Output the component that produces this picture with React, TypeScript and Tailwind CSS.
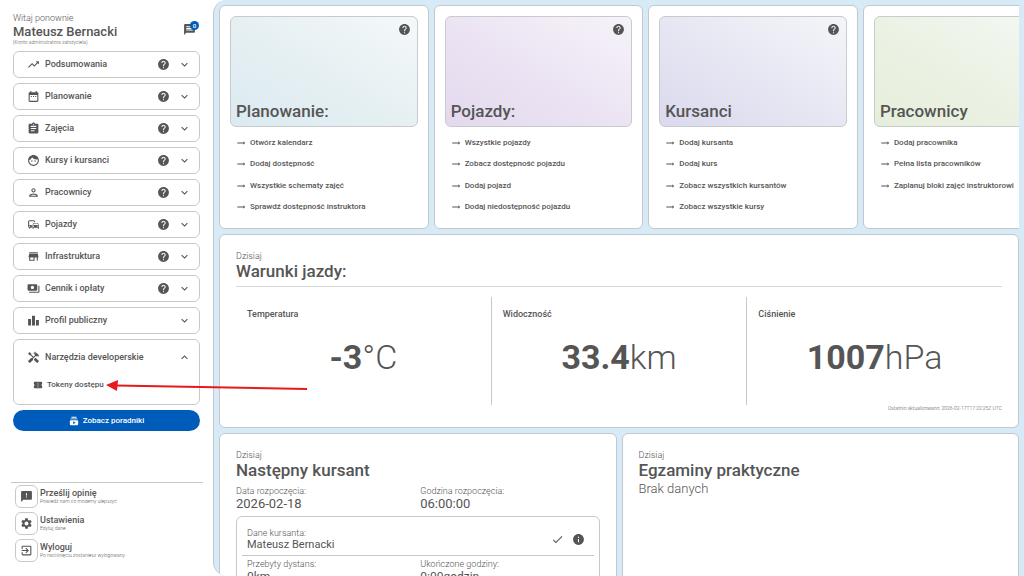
import type { ReactNode } from "react";
import type { IconType } from "react-icons";
import {
  MdTrendingUp, MdDateRange, MdAssignment, MdFace, MdOutlinePerson, MdOutlineCommute,
  MdStore, MdPayments, MdLeaderboard, MdHandyman, MdConfirmationNumber, MdSubscriptions,
  MdFeedback, MdSettings, MdExitToApp, MdMessage, MdHelp, MdExpandMore, MdExpandLess,
  MdTrendingFlat, MdCheck, MdInfo,
} from "react-icons/md";

const menu: { label: string; icon: IconType; help: boolean }[] = [
  { label: "Podsumowania", icon: MdTrendingUp, help: true },
  { label: "Planowanie", icon: MdDateRange, help: true },
  { label: "Zajęcia", icon: MdAssignment, help: true },
  { label: "Kursy i kursanci", icon: MdFace, help: true },
  { label: "Pracownicy", icon: MdOutlinePerson, help: true },
  { label: "Pojazdy", icon: MdOutlineCommute, help: true },
  { label: "Infrastruktura", icon: MdStore, help: true },
  { label: "Cennik i opłaty", icon: MdPayments, help: true },
  { label: "Profil publiczny", icon: MdLeaderboard, help: false },
];

const footer: { label: string; note: string; icon: IconType }[] = [
  { label: "Prześlij opinię", note: "Powiedź nam co możemy ulepszyć", icon: MdFeedback },
  { label: "Ustawienia", note: "Edytuj dane", icon: MdSettings },
  { label: "Wyloguj", note: "Po naciśnięciu zostaniesz wylogowany", icon: MdExitToApp },
];

const shortcuts = [
  {
    title: "Planowanie:",
    tint: "bg-linear-to-tr from-[#dbeaf2] via-[#e6f0f2] to-[#f4f8fb]",
    links: ["Otwórz kalendarz", "Dodaj dostępność", "Wszystkie schematy zajęć", "Sprawdź dostępność instruktora"],
  },
  {
    title: "Pojazdy:",
    tint: "bg-linear-to-tr from-[#e3d9ee] via-[#ece4f3] to-[#f6f3f9]",
    links: ["Wszystkie pojazdy", "Zobacz dostępność pojazdu", "Dodaj pojazd", "Dodaj niedostępność pojazdu"],
  },
  {
    title: "Kursanci",
    tint: "bg-linear-to-tr from-[#dbd9ee] via-[#e7e7f3] to-[#f4f5f9]",
    links: ["Dodaj kursanta", "Dodaj kurs", "Zobacz wszystkich kursantów", "Zobacz wszystkie kursy"],
  },
  {
    title: "Pracownicy",
    tint: "bg-linear-to-tr from-[#e6eedb] via-[#ecf2e4] to-[#f4f9f5]",
    links: ["Dodaj pracownika", "Pełna lista pracowników", "Zaplanuj bloki zajęć instruktorowi"],
  },
];

const weather = [
  { label: "Temperatura", value: "-3", unit: "°C" },
  { label: "Widoczność", value: "33.4", unit: "km" },
  { label: "Ciśnienie", value: "1007", unit: "hPa" },
];

function Card({ className, children }: { className: string; children: ReactNode }) {
  return <section className={`rounded-md border border-[#c4c8cb] bg-white ${className}`}>{children}</section>;
}

function Heading({ title }: { title: string }) {
  return (
    <header>
      <p className="text-[9px] leading-[10px] font-light">Dzisiaj</p>
      <h2 className="text-[17px] leading-5 font-medium">{title}</h2>
    </header>
  );
}

function Field({ label, value, size }: { label: string; value: string; size: string }) {
  return (
    <div className="flex-1">
      <dt className="text-[9px] leading-3 font-light">{label}</dt>
      <dd className={size}>{value}</dd>
    </div>
  );
}

function Sidebar() {
  return (
    <aside className="flex w-[213px] shrink-0 flex-col px-[13px] pt-[13px]">
      <header className="flex items-start justify-between">
        <div>
          <p className="text-[9px] leading-[11px] font-light">Witaj ponownie</p>
          <h1 className="text-[13px] leading-[15px] font-medium">Mateusz Bernacki</h1>
          <p className="text-[5px] leading-[6px] font-light">(Konto administratora założyciela)</p>
        </div>
        <button aria-label="Wiadomości" className="relative mt-[10px] mr-1">
          <MdMessage className="size-[13px]" />
          <span className="absolute -top-[2px] -right-[3px] flex size-[9px] items-center justify-center rounded-full bg-[#005cbb] text-[6px] font-medium text-white">0</span>
        </button>
      </header>

      <nav className="mt-[6px] flex flex-col gap-[5px]">
        {menu.map(({ label, icon: Icon, help }) => (
          <button key={label} className="flex h-[27px] items-center rounded-md border border-[#c8c8c8] pr-2 pl-[13px] text-[9px] font-medium">
            <Icon className="size-[13px]" />
            <span className="flex-1 pl-[5px] text-left">{label}</span>
            {help && <MdHelp className="mr-2 size-[13px]" />}
            <MdExpandMore className="size-[13px]" />
          </button>
        ))}
        <div className="h-[66px] rounded-md border border-[#c8c8c8] pr-2 pl-[13px] font-medium">
          <button className="flex h-[35px] w-full items-center text-[9px]">
            <MdHandyman className="size-[13px]" />
            <span className="flex-1 pl-[5px] text-left">Narzędzia developerskie</span>
            <MdExpandLess className="size-[13px]" />
          </button>
          <a href="#tokeny" className="flex h-5 items-center gap-1 pl-[6px] text-[8px]">
            <MdConfirmationNumber className="size-[10px]" />
            Tokeny dostępu
          </a>
        </div>
        <button className="flex h-[21px] items-center justify-center gap-1 rounded-full bg-[#005cbb] text-[8px] font-medium text-white">
          <MdSubscriptions className="size-[10px]" />
          Zobacz poradniki
        </button>
      </nav>

      <footer className="mt-auto mb-[14px] -ml-[2px] -mr-[3px] border-t border-[#c8c8c8] pt-[2px] pl-1">
        <ul className="flex flex-col gap-1">
          {footer.map(({ label, note, icon: Icon }) => (
            <li key={label}>
              <button className="flex items-center gap-[2px] text-left">
                <span className="flex size-[23px] items-center justify-center rounded-md border border-[#c8c8c8]">
                  <Icon className="size-[13px]" />
                </span>
                <span>
                  <span className="block text-[9px] leading-[10px] font-medium">{label}</span>
                  <span className="block text-[5px] leading-[7px] font-light">{note}</span>
                </span>
              </button>
            </li>
          ))}
        </ul>
      </footer>
    </aside>
  );
}

export default function App() {
  return (
    <div className="relative flex h-screen overflow-hidden bg-white font-[Roboto,sans-serif] text-[#555]">
      <Sidebar />
      <main className="min-w-0 flex-1 overflow-hidden rounded-l-[14px] border-l border-[#c4c8cb] bg-[#d6eaf8] p-[5px]">
        <div className="flex flex-col gap-[5px]">
          <div className="flex gap-[5px] overflow-hidden">
            {shortcuts.map(({ title, tint, links }) => (
              <Card key={title} className="h-[224px] w-[calc((100%-11px)*5/19+2px)] shrink-0 p-[10px]">
                <div className={`flex h-[111px] flex-col justify-between rounded-md border border-[#c8cacc] pb-1 pl-[5px] ${tint}`}>
                  <button aria-label="Pomoc" className="mt-[6px] mr-[6px] self-end">
                    <MdHelp className="size-[13px]" />
                  </button>
                  <h2 className="text-[17px] leading-[22px] font-medium">{title}</h2>
                </div>
                <ul className="flex h-[91px] flex-col pt-[5px] pl-[6px]">
                  {links.map((link) => (
                    <li key={link} className="h-1/4">
                      <a href="#skrot" className="flex h-full items-center gap-1 text-[8px] font-medium whitespace-nowrap">
                        <MdTrendingFlat className="size-[10px]" />
                        {link}
                      </a>
                    </li>
                  ))}
                </ul>
              </Card>
            ))}
          </div>

          <Card className="h-[194px] px-4 pt-4">
            <Heading title="Warunki jazdy:" />
            <dl className="mt-[5px] flex border-t border-[#d8d8d8] pt-[10px]">
              {weather.map(({ label, value, unit }) => (
                <div key={label} className="h-[108px] flex-1 border-r border-[#c8c8c8] pt-[11px] last:border-r-0">
                  <dt className="pl-[11px] text-[9px] leading-3 font-medium">{label}</dt>
                  <dd className="pt-[17px] text-center text-[34px] leading-10 font-light">
                    <b className="font-bold">{value}</b>{unit}
                  </dd>
                </div>
              ))}
            </dl>
            <p className="text-right text-[5px] leading-[7px] font-light">Ostatnio aktualizowano: 2026-02-17T17:22:25Z UTC</p>
          </Card>

          <div className="flex gap-[5px]">
            <Card className="h-[220px] flex-1 px-4 pt-4">
              <Heading title="Następny kursant" />
              <dl className="mt-[5px] flex gap-[5px]">
                <Field label="Data rozpoczęcia:" value="2026-02-18" size="text-[13px] leading-[14px]" />
                <Field label="Godzina rozpoczęcia:" value="06:00:00" size="text-[13px] leading-[14px]" />
              </dl>
              <div className="mt-[5px] rounded-md border border-[#c8c8c8] px-[5px]">
                <div className="flex items-center border-b border-[#c8c8c8] pt-[10px] pr-[9px] pb-[4px] pl-[5px]">
                  <dl className="flex flex-1"><Field label="Dane kursanta:" value="Mateusz Bernacki" size="text-[11px] leading-3" /></dl>
                  <MdCheck className="mr-2 size-[13px]" />
                  <MdInfo className="size-[13px]" />
                </div>
                <dl className="flex pt-[2px] pb-10 pl-[5px]">
                  <Field label="Przebyty dystans:" value="0km" size="text-[12px] leading-[14px]" />
                  <Field label="Ukończone godziny:" value="0:00godzin" size="text-[12px] leading-[14px]" />
                </dl>
              </div>
            </Card>
            <Card className="h-[220px] flex-1 px-4 pt-4">
              <Heading title="Egzaminy praktyczne" />
              <p className="text-[13px] leading-[17px] font-light">Brak danych</p>
            </Card>
          </div>
        </div>
      </main>

      <svg aria-hidden="true" viewBox="0 0 202 12" className="pointer-events-none absolute top-[380px] left-[106px] h-3 w-[202px]">
        <path d="M10 5.5 201 9" stroke="#e8191c" strokeWidth="2" />
        <path d="M0 5 12 0 11 11Z" fill="#e8191c" />
      </svg>
    </div>
  );
}
